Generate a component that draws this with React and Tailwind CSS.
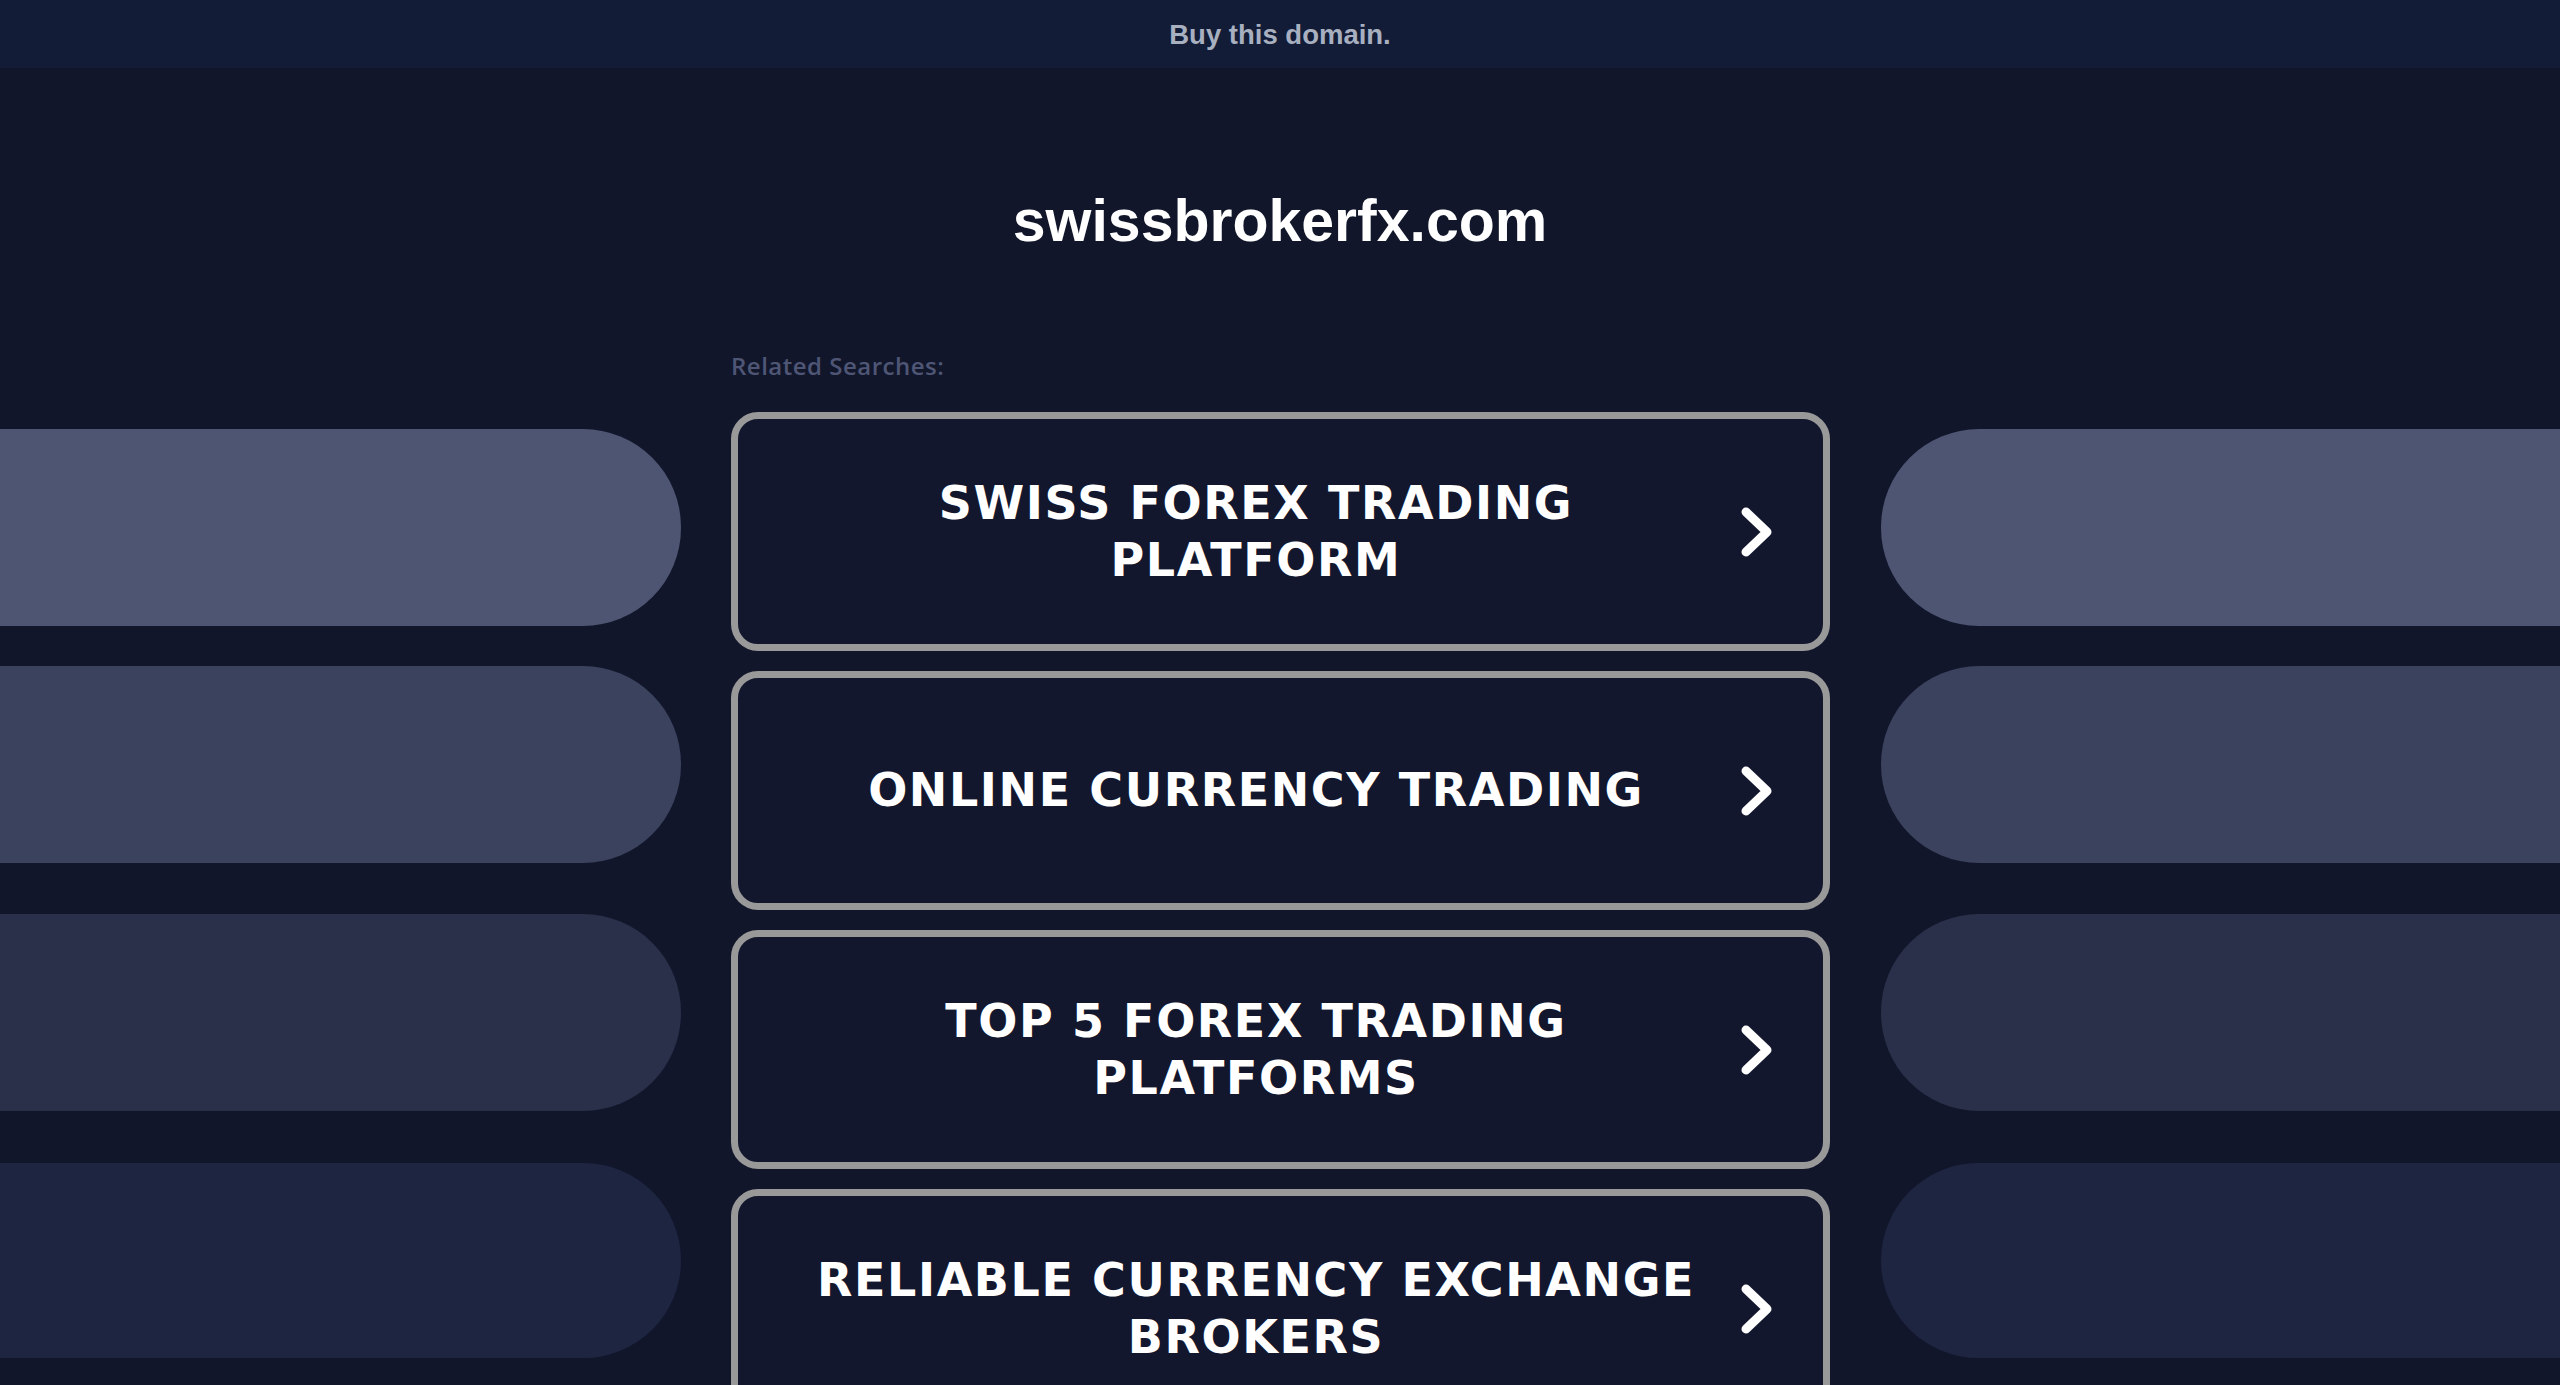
import React from 'react';

const searches = [
  'Swiss Forex Trading Platform',
  'Online Currency Trading',
  'Top 5 Forex Trading Platforms',
  'Reliable Currency Exchange Brokers',
];

// decorative side pills, lightest at the top
const pills = [
  { color: 'bg-[#4d5572]', space: 'mt-0', h: 'h-[197px]' },
  { color: 'bg-[#3b425e]', space: 'mt-[40px]', h: 'h-[197px]' },
  { color: 'bg-[#2a304a]', space: 'mt-[51px]', h: 'h-[197px]' },
  { color: 'bg-[#1e2540]', space: 'mt-[52px]', h: 'h-[195px]' },
];

const Chevron = () => (
  <svg width="32" height="50" viewBox="0 0 32 50" className="shrink-0">
    <polyline
      points="5,5 26,25 5,45"
      fill="none"
      stroke="#ffffff"
      strokeWidth="9"
      strokeLinecap="round"
      strokeLinejoin="round"
    />
  </svg>
);

const App = () => {
  return (
    <div className="bg-[#11162b] min-h-screen w-full overflow-hidden">
      {/* Top bar */}
      <div className="h-[68px] bg-[#121c37] flex items-center justify-center pt-[2px]">
        <a href="#" className="font-['Liberation_Sans',Arial,sans-serif] font-bold text-[27.5px] text-[#a8b0c0]">
          Buy this domain.
        </a>
      </div>

      {/* Domain name */}
      <h1 className="mt-[124px] text-center font-['Liberation_Sans',Arial,sans-serif] font-bold text-[59px] leading-none text-white">
        swissbrokerfx.com
      </h1>

      <div className="flex mt-[103px]">
        {/* Left pills */}
        <div className="w-[681px] shrink-0 pt-[75px] flex flex-col">
          {pills.map((p, i) => (
            <div key={i} className={`${p.color} ${p.space} ${p.h} w-full rounded-r-[98px]`} />
          ))}
        </div>

        {/* Related searches */}
        <div className="w-[1099px] shrink-0 ml-[50px]">
          <p className="font-['Open_Sans',sans-serif] font-semibold text-[24px] tracking-[0.5px] leading-none text-[#4f5675] mb-[34px]">
            Related Searches:
          </p>
          <div className="flex flex-col gap-[20px]">
            {searches.map((s) => (
              <a
                key={s}
                href="#"
                className="h-[239px] border-[7px] border-[#999999] rounded-[27px] bg-[#12172e] flex items-center pl-[68px] pr-[50px] gap-[35px]"
              >
                <span className="flex-1 text-center uppercase font-['DejaVu_Sans',Verdana,sans-serif] font-bold text-[46px] leading-[57px] tracking-[1.6px] text-white">
                  {s}
                </span>
                <Chevron />
              </a>
            ))}
          </div>
        </div>

        {/* Right pills */}
        <div className="flex-1 ml-[51px] pt-[75px] flex flex-col">
          {pills.map((p, i) => (
            <div key={i} className={`${p.color} ${p.space} ${p.h} w-full rounded-l-[98px]`} />
          ))}
        </div>
      </div>
    </div>
  );
};

export default App;
